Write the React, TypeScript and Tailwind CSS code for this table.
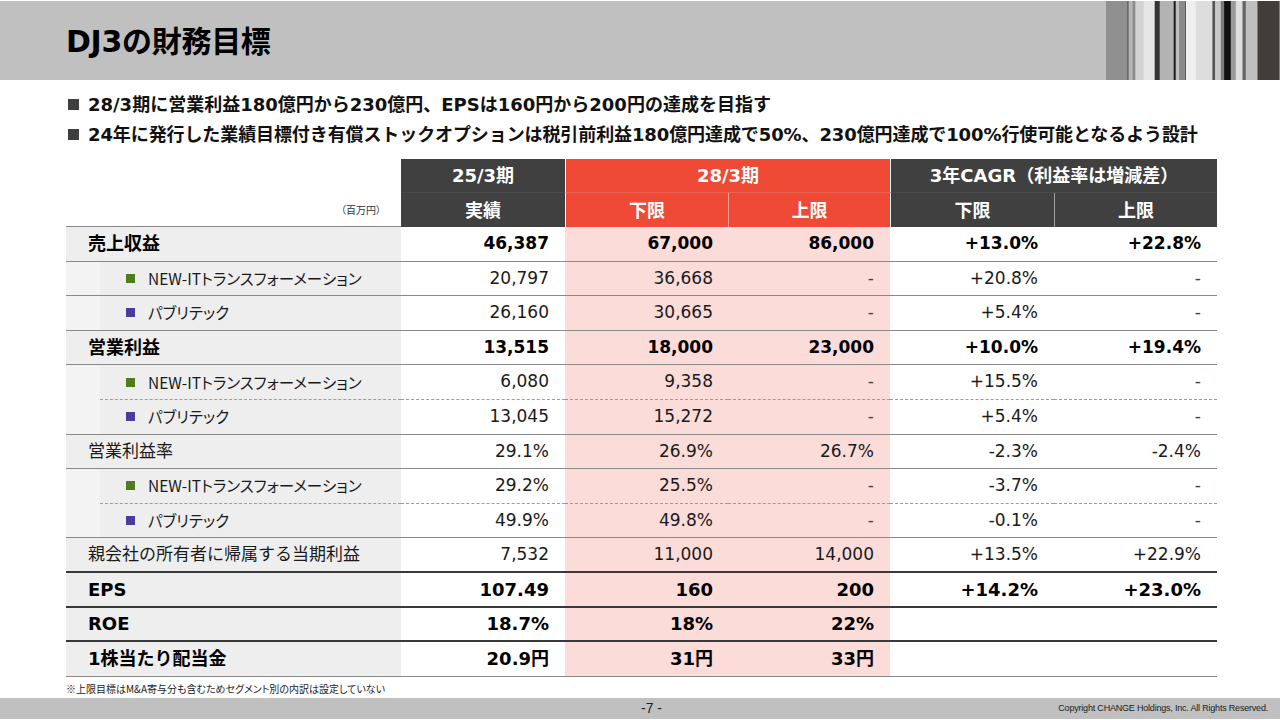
import React from "react";

type Kind = "main" | "sub" | "plain" | "big";
type Line = "gray" | "dash" | "dark";

interface Row {
  label: string;
  kind: Kind;
  dot?: "green" | "purple";
  v: string[];
  line: Line;
}

const NEWIT = "NEW-ITトランスフォーメーション";
const PUB = "パブリテック";

const rows: Row[] = [
  { label: "売上収益", kind: "main", v: ["46,387", "67,000", "86,000", "+13.0%", "+22.8%"], line: "gray" },
  { label: NEWIT, kind: "sub", dot: "green", v: ["20,797", "36,668", "-", "+20.8%", "-"], line: "gray" },
  { label: PUB, kind: "sub", dot: "purple", v: ["26,160", "30,665", "-", "+5.4%", "-"], line: "gray" },
  { label: "営業利益", kind: "main", v: ["13,515", "18,000", "23,000", "+10.0%", "+19.4%"], line: "gray" },
  { label: NEWIT, kind: "sub", dot: "green", v: ["6,080", "9,358", "-", "+15.5%", "-"], line: "dash" },
  { label: PUB, kind: "sub", dot: "purple", v: ["13,045", "15,272", "-", "+5.4%", "-"], line: "gray" },
  { label: "営業利益率", kind: "plain", v: ["29.1%", "26.9%", "26.7%", "-2.3%", "-2.4%"], line: "gray" },
  { label: NEWIT, kind: "sub", dot: "green", v: ["29.2%", "25.5%", "-", "-3.7%", "-"], line: "dash" },
  { label: PUB, kind: "sub", dot: "purple", v: ["49.9%", "49.8%", "-", "-0.1%", "-"], line: "gray" },
  { label: "親会社の所有者に帰属する当期利益", kind: "plain", v: ["7,532", "11,000", "14,000", "+13.5%", "+22.9%"], line: "dark" },
  { label: "EPS", kind: "big", v: ["107.49", "160", "200", "+14.2%", "+23.0%"], line: "dark" },
  { label: "ROE", kind: "big", v: ["18.7%", "18%", "22%", "", ""], line: "dark" },
  { label: "1株当たり配当金", kind: "big", v: ["20.9円", "31円", "33円", "", ""], line: "gray" },
];

// barcode-ish stripes in the header's right corner
const stripes: [number, string][] = [
  [21, "#8f908f"], [1.7, "#6a6a6a"], [4, "#b5b5b5"], [2.7, "#8a8a8a"], [8.3, "#d2d2d2"],
  [11, "#e6e6e6"], [5, "#343434"], [14, "#b3b3b3"], [2, "#1c1c1c"], [3.3, "#bdbdbd"],
  [6, "#8a8a8a"], [0.7, "#222222"], [10, "#efefef"], [16.7, "#dcdddc"], [2.7, "#555555"],
  [5.7, "#c8c8c8"], [3.3, "#7a7a7a"], [6.7, "#121212"], [5, "#999999"], [6.7, "#dedede"],
  [3.3, "#666666"], [11.7, "#bfbfbf"], [21.7, "#403d3b"],
];

function Barcode() {
  let x = 0;
  return (
    <svg width="174" height="79" viewBox="0 0 174 79" className="block">
      {stripes.map(([w, c], i) => {
        const r = <rect key={i} x={x} y={0} width={w + 0.3} height={79} fill={c} />;
        x += w;
        return r;
      })}
    </svg>
  );
}

const lineCls = (l: Line) =>
  l === "dark"
    ? "border-b-2 border-[#3a3a3a]"
    : l === "dash"
    ? "border-b border-dashed border-[#9c9c9c]"
    : "border-b border-[#8a8a8a]";

function DataRow({ r }: { r: Row }) {
  const bold = r.kind === "main" || r.kind === "big";
  const size = r.kind === "big" ? "text-[18px]" : "text-[17px]";
  const valCls = `${bold ? "font-bold text-black" : "text-[#1a1a1a]"} ${size}`;
  const lc = lineCls(r.line);
  return (
    <div className="grid grid-cols-[335px_164px_163px_162px_164px_163px] h-[34.6px]">
      {r.kind === "sub" ? (
        <div className="flex">
          <div className={`w-[34px] bg-[#f3f3f3] ${r.line === "dash" ? "" : lc}`} />
          <div className={`flex-1 flex items-center pl-[26px] bg-[#eeeeee] ${lc}`}>
            <span className={`w-[9px] h-[9px] ${r.dot === "green" ? "bg-[#4f7c1f]" : "bg-[#4b3b9e]"}`} />
            <span className="ml-[13px] text-[15.5px] text-[#1a1a1a] font-['Noto_Sans_CJK_JP',sans-serif] [font-feature-settings:'palt']">
              {r.label}
            </span>
          </div>
        </div>
      ) : (
        <div className={`flex items-center pl-[22px] bg-[#eeeeee] ${lc}`}>
          <span className={`${bold ? "font-bold text-black text-[18px]" : "text-[#1a1a1a] text-[17px]"}`}>{r.label}</span>
        </div>
      )}
      {r.v.map((v, i) => (
        <div
          key={i}
          className={`flex items-center justify-end ${i === 1 || i === 2 ? "bg-[#fbdcd8]" : "bg-white"} ${i === 1 ? "pr-[15px]" : "pr-[16px]"} ${lc}`}
        >
          <span className={v === "-" ? "text-[#444] text-[17px]" : valCls}>{v}</span>
        </div>
      ))}
    </div>
  );
}

export default function App() {
  return (
    <div className="w-[1280px] h-[720px] bg-white overflow-hidden flex flex-col font-['DejaVu_Sans','Noto_Sans_CJK_JP',sans-serif] text-black">
      {/* title bar */}
      <div className="mt-[1px] h-[79px] bg-[#bfc0bf] flex items-center justify-between">
        <h1 className="pl-[66px] pt-[2px] text-[30px] font-bold tracking-[-0.3px] text-black">DJ3の財務目標</h1>
        <Barcode />
      </div>

      {/* bullets */}
      <div className="pl-[68px] pt-[9px] text-[18px] font-bold text-[#111]">
        <div className="h-[30px] flex items-center">
          <span className="w-[11px] h-[11px] bg-[#3f3f3f] mr-[9px]" />
          28/3期に営業利益180億円から230億円、EPSは160円から200円の達成を目指す
        </div>
        <div className="h-[30px] flex items-center tracking-[-0.1px]">
          <span className="w-[11px] h-[11px] bg-[#3f3f3f] mr-[9px]" />
          24年に発行した業績目標付き有償ストックオプションは税引前利益180億円達成で50%、230億円達成で100%行使可能となるよう設計
        </div>
      </div>

      {/* table */}
      <div className="ml-[66px] mt-[10px] w-[1151px]">
        <div className="grid grid-cols-[335px_164px_163px_162px_164px_163px] grid-rows-[34px_34px] text-white font-bold text-[18px]">
          <div className="row-span-2 flex items-end justify-end pr-[20px] pb-[9px] border-b border-[#8a8a8a]">
            <span className="text-[10px] font-normal text-[#333] font-['Noto_Sans_CJK_JP',sans-serif] [font-feature-settings:'palt']">（百万円）</span>
          </div>
          <div className="bg-[#404040] flex items-center justify-center border-b border-[#4c4c4c]">25/3期</div>
          <div className="col-span-2 bg-[#ef4a36] flex items-center justify-center border-l border-white border-b border-b-[#f0604e]">28/3期</div>
          <div className="col-span-2 bg-[#404040] flex items-center justify-center border-l border-white border-b border-b-[#4c4c4c]">3年CAGR（利益率は増減差）</div>
          <div className="bg-[#404040] flex items-center justify-center">実績</div>
          <div className="bg-[#ef4a36] flex items-center justify-center border-l border-white">下限</div>
          <div className="bg-[#ef4a36] flex items-center justify-center border-l border-[#f7a194]">上限</div>
          <div className="bg-[#404040] flex items-center justify-center border-l border-white">下限</div>
          <div className="bg-[#404040] flex items-center justify-center border-l border-[#a0a0a0]">上限</div>
        </div>
        {rows.map((r, i) => (
          <DataRow key={i} r={r} />
        ))}
      </div>

      {/* note */}
      <div className="ml-[66px] mt-[4px] h-[15px] flex items-center text-[10px] text-[#222] font-['Noto_Sans_CJK_JP',sans-serif] [font-feature-settings:'palt']">
        ※上限目標はM&A寄与分も含むためセグメント別の内訳は設定していない
      </div>

      {/* footer */}
      <div className="mt-auto mb-[1px] h-[21px] bg-[#bfc0bf] flex items-center">
        <span className="pl-[641px] text-[14px] text-[#222] font-['Liberation_Sans',sans-serif]">-7 -</span>
        <span className="ml-auto pr-[12px] text-[9px] text-[#222] tracking-[-0.2px] font-['Liberation_Sans_Narrow','Liberation_Sans',sans-serif]">
          Copyright CHANGE Holdings, Inc. All Rights Reserved.
        </span>
      </div>
    </div>
  );
}
